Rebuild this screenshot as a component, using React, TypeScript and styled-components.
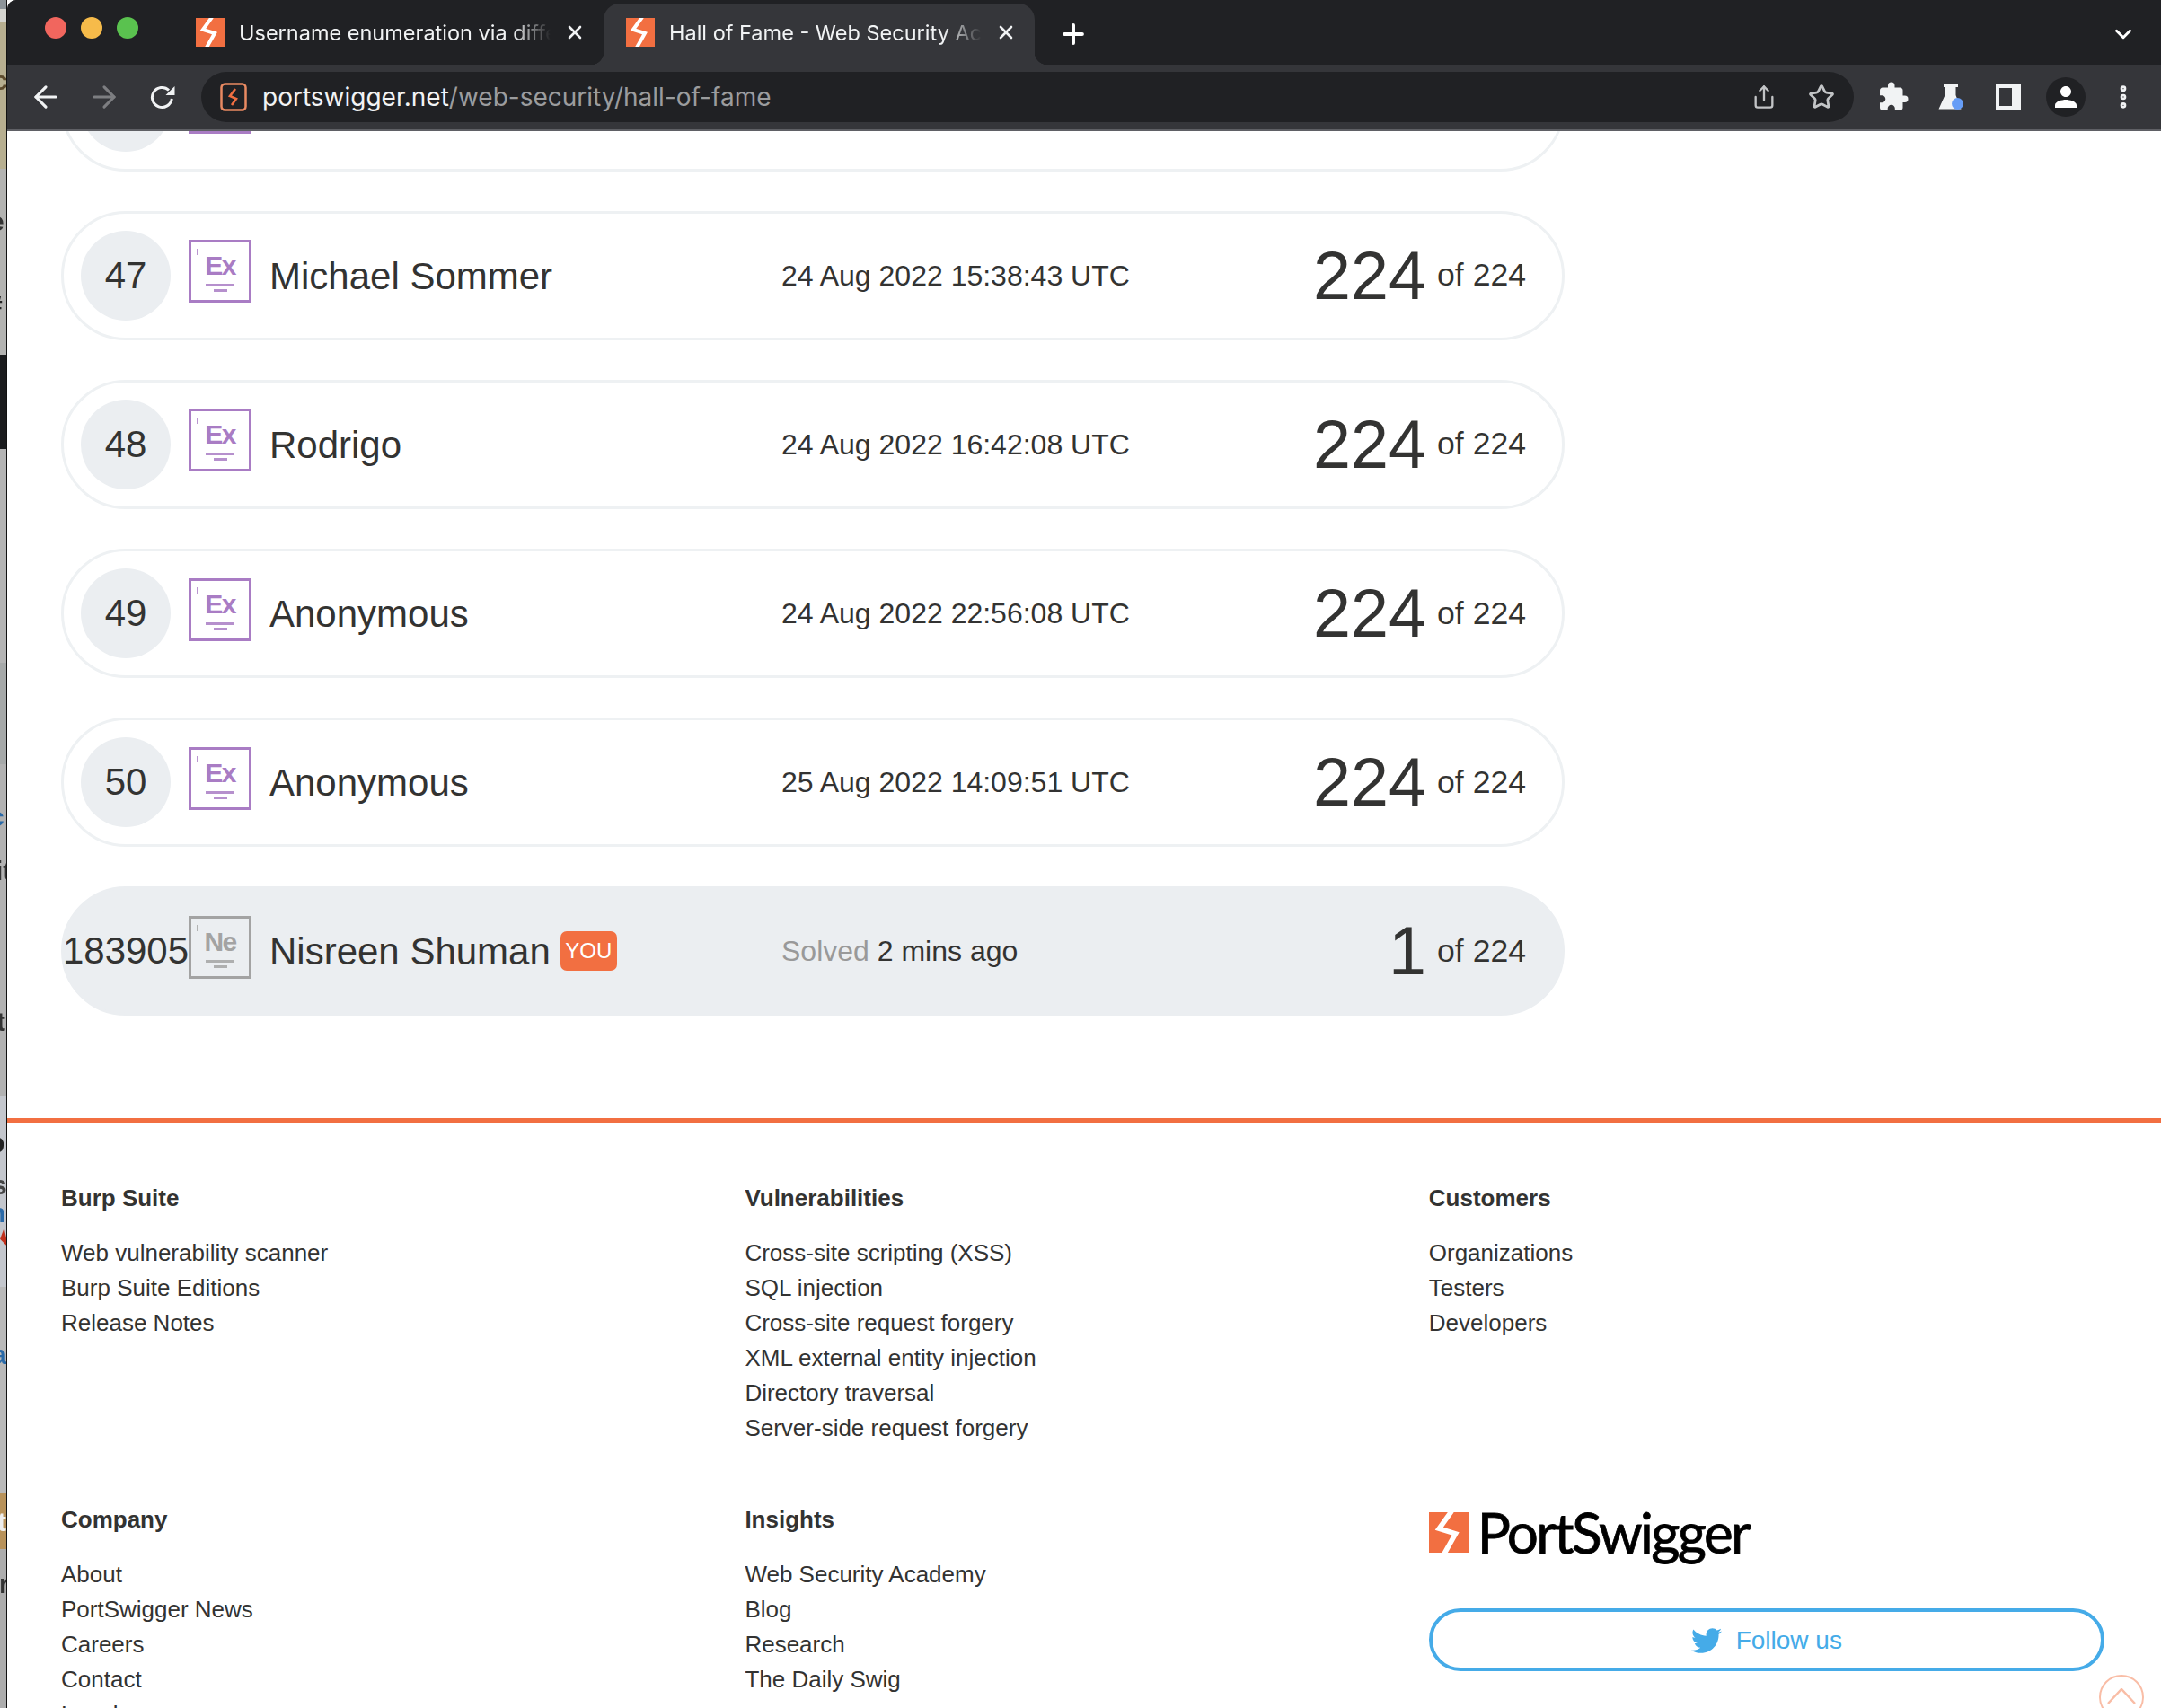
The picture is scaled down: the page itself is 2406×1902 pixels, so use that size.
import React from 'react';
import styled, { createGlobalStyle } from 'styled-components';
import { ArrowLeft, ArrowRight, ChevronDown, EllipsisVertical, Plus, Share, Star, X } from 'lucide-react';
import { FaTwitter } from 'react-icons/fa';
import { MdExtension, MdPerson } from 'react-icons/md';

const ORANGE = '#f26f41';
const INK = '#333332';

const GlobalStyle = createGlobalStyle`
    html, body {
        margin: 0;
        padding: 0;
        background: #fff;
    }
    body {
        font-family: "Liberation Sans", Arial, sans-serif;
        color: ${INK};
    }
    * {
        box-sizing: border-box;
    }
`;

const Screen = styled.div`
    position: relative;
    display: flex;
    width: 2406px;
    height: 1902px;
    overflow: hidden;
`;

const DesktopEdge = styled.div`
    position: relative;
    flex: none;
    width: 8px;
    overflow: hidden;
    border-right: 1px solid #111;
    background: linear-gradient(to bottom,
        #8d9499 0 10px, #d5d5d0 10px 25px, #b7af90 25px 188px, #b3b3b1 188px 395px,
        #1a1b1d 395px 500px, #b4b4b4 500px 738px, #a6a9a9 738px 851px, #b2b2b2 851px 1220px,
        #c4c7cd 1220px 1433px, #b9b9b9 1433px 1663px, #b8925a 1663px 1725px, #adadad 1725px);
`;

const EdgeGlyph = styled.span<{ $top: number; $color: string; $left: number }>`
    position: absolute;
    top: ${p => p.$top}px;
    left: ${p => p.$left}px;
    font-size: 30px;
    line-height: 30px;
    font-weight: 700;
    color: ${p => p.$color};
    filter: blur(0.6px);
`;

const EdgeTriangle = styled.div`
    position: absolute;
    top: 1368px;
    left: 0;
    width: 0;
    height: 0;
    border-top: 11px solid transparent;
    border-bottom: 11px solid transparent;
    border-right: 7px solid #c0301c;
    transform: rotate(-12deg);
`;

const BrowserWindow = styled.div`
    flex: 1;
    min-width: 0;
    display: flex;
    flex-direction: column;
`;

const Chrome = styled.header`
    flex: none;
    height: 146px;
    background: #35363a;
    border-top-left-radius: 10px;
    overflow: hidden;
    border-bottom: 2px solid #5f6065;
`;

const TabStrip = styled.div`
    display: flex;
    align-items: flex-end;
    height: 72px;
    padding-left: 42px;
    background: #202124;
`;

const TrafficLights = styled.div`
    align-self: flex-start;
    flex: none;
    display: flex;
    gap: 16px;
    margin-top: 19px;
    margin-right: 39px;
`;

const Light = styled.span<{ $color: string }>`
    width: 24px;
    height: 24px;
    border-radius: 50%;
    background: ${p => p.$color};
`;

const Tab = styled.div<{ $active?: boolean }>`
    position: relative;
    flex: none;
    display: flex;
    align-items: center;
    width: ${p => (p.$active ? '480px' : '479px')};
    height: 68px;
    padding: 0 20px 4px 25px;
    border-radius: 18px 18px 0 0;
    background: ${p => (p.$active ? '#35363a' : 'transparent')};
    ${p =>
        p.$active &&
        `
        &::before, &::after {
            content: '';
            position: absolute;
            bottom: 0;
            width: 14px;
            height: 14px;
        }
        &::before {
            left: -14px;
            background: radial-gradient(circle at 0 0, transparent 14px, #35363a 14.5px);
        }
        &::after {
            right: -14px;
            background: radial-gradient(circle at 100% 0, transparent 14px, #35363a 14.5px);
        }
    `}
`;

const TabTitle = styled.span`
    flex: 1;
    min-width: 0;
    margin: 0 8px 0 16px;
    padding-top: 1px;
    overflow: hidden;
    white-space: nowrap;
    font-family: Inter, "Liberation Sans", sans-serif;
    font-size: 23.5px;
    color: #f1f3f4;
    -webkit-mask-image: linear-gradient(to right, #000 86%, transparent 98%);
    mask-image: linear-gradient(to right, #000 86%, transparent 98%);
`;

const StripButton = styled.button<{ $push?: boolean }>`
    flex: none;
    display: flex;
    align-items: center;
    justify-content: center;
    align-self: center;
    width: 40px;
    height: 40px;
    margin: 4px ${p => (p.$push ? '22px' : '0')} 0 ${p => (p.$push ? 'auto' : '23px')};
    padding: 0;
    border: 0;
    background: none;
    color: #fff;
`;

const Toolbar = styled.div`
    display: flex;
    align-items: center;
    height: 72px;
    padding: 0 10px 0 10px;
`;

const NavButton = styled.button<{ $dim?: boolean }>`
    flex: none;
    display: flex;
    align-items: center;
    justify-content: center;
    width: 65px;
    height: 56px;
    padding: 0;
    border: 0;
    background: none;
    color: ${p => (p.$dim ? '#7d7e81' : '#f1f3f4')};
`;

const Omnibox = styled.div`
    flex: 1;
    min-width: 0;
    display: flex;
    align-items: center;
    height: 56px;
    margin: 0 12px 0 11px;
    padding: 0 4px 0 21px;
    border-radius: 28px;
    background: #202124;
`;

const Url = styled.div`
    flex: 1;
    margin-left: 17px;
    font-family: Inter, "Liberation Sans", sans-serif;
    font-size: 28px;
    color: #9b9c9e;
    white-space: nowrap;
    strong {
        font-weight: 400;
        color: #f1f3f4;
    }
`;

const ToolButton = styled.button<{ $grey?: boolean }>`
    flex: none;
    display: flex;
    align-items: center;
    justify-content: center;
    width: 64px;
    height: 56px;
    padding: 0;
    border: 0;
    background: none;
    color: ${p => (p.$grey ? '#c2c4c6' : '#f1f3f4')};
`;

const Avatar = styled.span`
    display: flex;
    align-items: center;
    justify-content: center;
    width: 44px;
    height: 44px;
    border-radius: 50%;
    background: #202124;
    color: #fff;
`;

const Page = styled.main`
    flex: 1;
    min-height: 0;
    overflow: hidden;
    background: #fff;
`;

const Board = styled.section`
    display: flex;
    flex-direction: column;
    gap: 44.5px;
    width: 1674px;
    margin: -99px 0 114px 60px;
`;

const Row = styled.div<{ $you?: boolean }>`
    display: flex;
    align-items: center;
    height: 143.6px;
    padding: 0 40px 0 19px;
    border: 3px solid ${p => (p.$you ? '#ebeef1' : '#eef1f3')};
    border-radius: 72px;
    background: ${p => (p.$you ? '#ebeef1' : '#fff')};
`;

const Rank = styled.div`
    flex: none;
    display: flex;
    align-items: center;
    justify-content: center;
    width: 100px;
    height: 100px;
    border-radius: 50%;
    background: #ebeef1;
    font-size: 42px;
    white-space: nowrap;
`;

const Tile = styled.div<{ $color: string }>`
    position: relative;
    flex: none;
    display: flex;
    flex-direction: column;
    align-items: center;
    width: 70px;
    height: 70px;
    margin: 0 0 9px 20px;
    padding-top: 11px;
    border: 3px solid ${p => p.$color};
    color: ${p => p.$color};
    &::before {
        content: '';
        position: absolute;
        top: 7px;
        left: 6px;
        width: 2px;
        height: 7px;
        background: ${p => p.$color};
        opacity: 0.8;
    }
`;

const Symbol = styled.span`
    height: 30px;
    margin-bottom: 5px;
    font-size: 30px;
    line-height: 30px;
    font-weight: 700;
    letter-spacing: -1.6px;
`;

const TileRule = styled.span<{ $width: number }>`
    width: ${p => p.$width}px;
    height: 3px;
    margin-bottom: 3px;
    background: currentColor;
    opacity: 0.85;
`;

const Name = styled.div`
    flex: none;
    display: flex;
    align-items: center;
    width: 570px;
    margin-left: 20px;
    padding-top: 2px;
    font-size: 42px;
    white-space: nowrap;
`;

const YouBadge = styled.span`
    display: flex;
    align-items: center;
    justify-content: center;
    width: 63px;
    height: 44px;
    margin: 0 0 2px 11px;
    border-radius: 7px;
    background: ${ORANGE};
    color: #fff;
    font-size: 24px;
`;

const Stamp = styled.div`
    flex: none;
    padding-top: 1px;
    font-size: 32px;
    white-space: nowrap;
    em {
        font-style: normal;
        color: #999;
    }
`;

const Score = styled.div`
    flex: 1;
    display: flex;
    align-items: center;
    justify-content: flex-end;
    gap: 12px;
    font-size: 35.6px;
    white-space: nowrap;
    b {
        font-size: 75.5px;
        line-height: 76px;
        font-weight: 400;
    }
`;

const Footer = styled.footer`
    display: grid;
    grid-template-columns: repeat(3, 761.4px);
    row-gap: 63px;
    padding: 64px 0 0 60px;
    border-top: 6px solid ${ORANGE};
`;

const FooterColumn = styled.nav`
    display: flex;
    flex-direction: column;
    font-size: 26px;
    line-height: 39px;
`;

const FooterTitle = styled.h4`
    margin: 0 0 22px;
    font-size: 26px;
    line-height: 39px;
    font-weight: 700;
`;

const FooterLink = styled.a`
    color: ${INK};
    text-decoration: none;
`;

const BrandColumn = styled.div`
    display: flex;
    flex-direction: column;
    align-items: flex-start;
    padding-top: 11px;
`;

const Brand = styled.div`
    display: flex;
    align-items: center;
    gap: 9px;
    height: 45px;
`;

const Wordmark = styled.span`
    font-family: Lato, "Liberation Sans", sans-serif;
    font-size: 62px;
    line-height: 45px;
    letter-spacing: -2.6px;
    font-weight: 400;
    color: #000;
    -webkit-text-stroke: 0.8px #000;
`;

const FollowButton = styled.a`
    display: flex;
    align-items: center;
    justify-content: center;
    gap: 16px;
    width: 752px;
    height: 70px;
    margin-top: 62px;
    padding-top: 2px;
    border: 4px solid #45abe8;
    border-radius: 35px;
    color: #45abe8;
    font-size: 28px;
    text-decoration: none;
`;

const BackToTop = styled.div`
    position: absolute;
    top: 1865px;
    left: 2337px;
    display: flex;
    justify-content: center;
    padding-top: 13px;
    width: 50px;
    height: 50px;
    border: 2px solid #f9bda6;
    border-radius: 50%;
`;

const Bolt: React.FC<{ size: number }> = ({ size }) => (
    <svg width={size} height={size} viewBox="0 0 32 32">
        <rect width="32" height="32" fill={ORANGE} />
        <polyline points="18,-1 8,13 21,17 12,33" fill="none" stroke="#fff" strokeWidth="4" />
    </svg>
);

const SiteIcon = () => (
    <svg width="30" height="32" viewBox="0 0 30 32">
        <rect x="1.5" y="1.5" width="27" height="29" rx="4" fill="none" stroke="#e98a62" strokeWidth="2.5" />
        <polyline points="17,7 11,15 18,18 13,25" fill="none" stroke={ORANGE} strokeWidth="2.6" />
    </svg>
);

const ReloadIcon = () => (
    <svg width="28" height="28" viewBox="0 0 28 28">
        <path d="M21 6.5A11 11 0 1 0 24.3 16" fill="none" stroke="currentColor" strokeWidth="3" />
        <polygon points="27.5,2 27.5,12 17.5,12" fill="currentColor" />
    </svg>
);

const FlaskIcon = () => (
    <svg width="28" height="28" viewBox="0 0 28 28">
        <path d="M6 0h16v3h-2.5v9l6 15.5H0.5L7.500 12V3H6z" fill="#f1f3f4" />
        <circle cx="21.500" cy="21.500" r="6.500" fill="#669df6" />
    </svg>
);

const PanelIcon = () => (
    <svg width="28" height="28" viewBox="0 0 28 28">
        <path fillRule="evenodd" d="M0 0h28v28H0z M4 4v20h14V4z" fill="#f1f3f4" />
    </svg>
);

const TopChevron = () => (
    <svg width="32" height="18" viewBox="0 0 32 18">
        <polyline points="1,17 16,1 31,17" fill="none" stroke="#f9bda6" strokeWidth="2.5" />
    </svg>
);

type Entry = { rank: string; name?: string; date?: string };

const entries: Entry[] = [
    { rank: '46' },
    { rank: '47', name: 'Michael Sommer', date: '24 Aug 2022 15:38:43 UTC' },
    { rank: '48', name: 'Rodrigo', date: '24 Aug 2022 16:42:08 UTC' },
    { rank: '49', name: 'Anonymous', date: '24 Aug 2022 22:56:08 UTC' },
    { rank: '50', name: 'Anonymous', date: '25 Aug 2022 14:09:51 UTC' },
];

const edgeGlyphs = [
    { top: 75, left: -8, color: '#5c4a2c', text: 'c' },
    { top: 232, left: -12, color: '#333', text: 'e' },
    { top: 285, left: -12, color: '#333', text: '-' },
    { top: 325, left: -14, color: '#222', text: '#' },
    { top: 895, left: -12, color: '#2a6aa8', text: 'c' },
    { top: 955, left: -5, color: '#333', text: 'it' },
    { top: 1123, left: -4, color: '#333', text: 't' },
    { top: 1258, left: -13, color: '#222', text: 'p' },
    { top: 1305, left: -9, color: '#444', text: 's' },
    { top: 1336, left: -12, color: '#2a6aa8', text: 'n' },
    { top: 1494, left: -9, color: '#2a6aa8', text: 'a' },
    { top: 1680, left: -3, color: '#eee', text: 't' },
    { top: 1749, left: -1, color: '#333', text: 'r' },
];

const footerColumns = [
    { title: 'Burp Suite', links: ['Web vulnerability scanner', 'Burp Suite Editions', 'Release Notes'] },
    {
        title: 'Vulnerabilities',
        links: [
            'Cross-site scripting (XSS)',
            'SQL injection',
            'Cross-site request forgery',
            'XML external entity injection',
            'Directory traversal',
            'Server-side request forgery',
        ],
    },
    { title: 'Customers', links: ['Organizations', 'Testers', 'Developers'] },
    { title: 'Company', links: ['About', 'PortSwigger News', 'Careers', 'Contact', 'Legal'] },
    { title: 'Insights', links: ['Web Security Academy', 'Blog', 'Research', 'The Daily Swig'] },
];

const ElementTile: React.FC<{ symbol: string; color: string }> = ({ symbol, color }) => (
    <Tile $color={color}>
        <Symbol>{symbol}</Symbol>
        <TileRule $width={32} />
        <TileRule $width={15} />
    </Tile>
);

const App: React.FC = () => {
    return (
        <Screen>
            <GlobalStyle />
            <DesktopEdge>
                {edgeGlyphs.map(g => (
                    <EdgeGlyph key={g.top} $top={g.top} $left={g.left} $color={g.color}>
                        {g.text}
                    </EdgeGlyph>
                ))}
                <EdgeTriangle />
            </DesktopEdge>
            <BrowserWindow>
                <Chrome>
                    <TabStrip>
                        <TrafficLights>
                            <Light $color="#f1665e" />
                            <Light $color="#f6bb4a" />
                            <Light $color="#5ac24f" />
                        </TrafficLights>
                        <Tab>
                            <Bolt size={32} />
                            <TabTitle>Username enumeration via different responses</TabTitle>
                            <X size={24} color="#f1f3f4" strokeWidth={2.6} />
                        </Tab>
                        <Tab $active>
                            <Bolt size={32} />
                            <TabTitle>Hall of Fame - Web Security Academy</TabTitle>
                            <X size={24} color="#f1f3f4" strokeWidth={2.6} />
                        </Tab>
                        <StripButton>
                            <Plus size={34} strokeWidth={2.8} />
                        </StripButton>
                        <StripButton $push>
                            <ChevronDown size={30} strokeWidth={2.4} />
                        </StripButton>
                    </TabStrip>
                    <Toolbar>
                        <NavButton>
                            <ArrowLeft size={38} strokeWidth={2} />
                        </NavButton>
                        <NavButton $dim>
                            <ArrowRight size={38} strokeWidth={2} />
                        </NavButton>
                        <NavButton>
                            <ReloadIcon />
                        </NavButton>
                        <Omnibox>
                            <SiteIcon />
                            <Url>
                                <strong>portswigger.net</strong>/web-security/hall-of-fame
                            </Url>
                            <ToolButton $grey>
                                <Share size={28} strokeWidth={2} />
                            </ToolButton>
                            <ToolButton $grey>
                                <Star size={30} strokeWidth={2.2} />
                            </ToolButton>
                        </Omnibox>
                        <ToolButton>
                            <MdExtension size={36} />
                        </ToolButton>
                        <ToolButton>
                            <FlaskIcon />
                        </ToolButton>
                        <ToolButton>
                            <PanelIcon />
                        </ToolButton>
                        <ToolButton>
                            <Avatar>
                                <MdPerson size={36} />
                            </Avatar>
                        </ToolButton>
                        <ToolButton>
                            <EllipsisVertical size={32} strokeWidth={3} />
                        </ToolButton>
                    </Toolbar>
                </Chrome>
                <Page>
                    <Board>
                        {entries.map(e => (
                            <Row key={e.rank}>
                                <Rank>{e.rank}</Rank>
                                <ElementTile symbol="Ex" color="#a97cc4" />
                                <Name>{e.name}</Name>
                                <Stamp>{e.date}</Stamp>
                                <Score>
                                    <b>224</b> of 224
                                </Score>
                            </Row>
                        ))}
                        <Row $you>
                            <Rank>183905</Rank>
                            <ElementTile symbol="Ne" color="#a3a3a3" />
                            <Name>
                                Nisreen Shuman
                                <YouBadge>YOU</YouBadge>
                            </Name>
                            <Stamp>
                                <em>Solved</em> 2 mins ago
                            </Stamp>
                            <Score>
                                <b>1</b> of 224
                            </Score>
                        </Row>
                    </Board>
                    <Footer>
                        {footerColumns.map(col => (
                            <FooterColumn key={col.title}>
                                <FooterTitle>{col.title}</FooterTitle>
                                {col.links.map(link => (
                                    <FooterLink key={link}>{link}</FooterLink>
                                ))}
                            </FooterColumn>
                        ))}
                        <BrandColumn>
                            <Brand>
                                <Bolt size={45} />
                                <Wordmark>PortSwigger</Wordmark>
                            </Brand>
                            <FollowButton>
                                <FaTwitter size={34} />
                                Follow us
                            </FollowButton>
                        </BrandColumn>
                    </Footer>
                </Page>
            </BrowserWindow>
            <BackToTop>
                <TopChevron />
            </BackToTop>
        </Screen>
    );
};

export default App;
